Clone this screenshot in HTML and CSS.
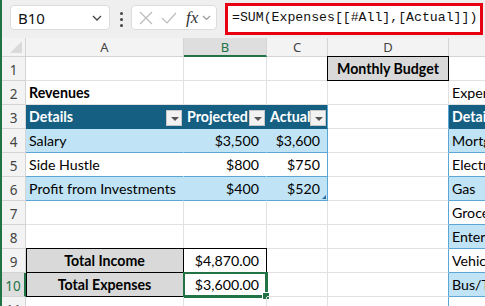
FILE: index.html
```html
<!DOCTYPE html>
<html lang="en">
<head>
    <meta charset="UTF-8">
    <meta name="viewport" content="width=device-width, initial-scale=1.0">
    <title>Monthly Budget</title>
    <link rel="stylesheet" href="styles.css">
</head>
<body>
    <div class="topbar">
        <div class="namebox">
            <span>B10</span>
            <svg width="10" height="6" viewBox="0 0 10 6"><path d="M1 1l4 4 4-4" fill="none" stroke="#444" stroke-width="1.3"/></svg>
        </div>
        <div class="dots"><i></i><i></i><i></i></div>
        <div class="fxbox">
            <svg width="14" height="14" viewBox="0 0 14 14"><path d="M1 1l12 12M13 1L1 13" stroke="#bbb" stroke-width="1.2"/></svg>
            <svg width="16" height="12" viewBox="0 0 16 12"><path d="M1 6l5 5L15 1" fill="none" stroke="#bbb" stroke-width="1.2"/></svg>
            <span class="fx">fx</span>
            <svg width="9" height="6" viewBox="0 0 9 6"><path d="M1 1l3.5 3.5L8 1" fill="none" stroke="#999" stroke-width="1.2"/></svg>
        </div>
        <div class="formula">=SUM(Expenses[[#All],[Actual]])</div>
    </div>

    <div class="sheet">
        <!-- column headers -->
        <div class="corner"></div>
        <div class="colh">A</div>
        <div class="colh sel">B</div>
        <div class="colh">C</div>
        <div class="colh">D</div>
        <div class="colh">E</div>

        <!-- row 1 -->
        <div class="rowh">1</div>
        <div class="c"></div>
        <div class="c"></div>
        <div class="c"></div>
        <div class="c title">Monthly Budget</div>
        <div class="c"></div>

        <!-- row 2 -->
        <div class="rowh">2</div>
        <div class="c bold">Revenues</div>
        <div class="c"></div>
        <div class="c"></div>
        <div class="c"></div>
        <div class="c">Expenses</div>

        <!-- row 3 -->
        <div class="rowh">3</div>
        <div class="c th">Details<span class="filter"></span></div>
        <div class="c th">Projected<span class="filter"></span></div>
        <div class="c th last">Actual<span class="filter"></span></div>
        <div class="c edge"></div>
        <div class="c th">Details</div>

        <!-- row 4 -->
        <div class="rowh">4</div>
        <div class="c td band">Salary</div>
        <div class="c td band num">$3,500</div>
        <div class="c td band num last">$3,600</div>
        <div class="c edge"></div>
        <div class="c td band">Mortgage</div>

        <!-- row 5 -->
        <div class="rowh">5</div>
        <div class="c td">Side Hustle</div>
        <div class="c td num">$800</div>
        <div class="c td num last">$750</div>
        <div class="c edge"></div>
        <div class="c td">Electricity</div>

        <!-- row 6 -->
        <div class="rowh">6</div>
        <div class="c td band">Profit from Investments</div>
        <div class="c td band num">$400</div>
        <div class="c td band num last">$520<span class="resize"></span></div>
        <div class="c edge"></div>
        <div class="c td band">Gas</div>

        <!-- row 7 -->
        <div class="rowh">7</div>
        <div class="c"></div>
        <div class="c"></div>
        <div class="c"></div>
        <div class="c edge"></div>
        <div class="c td">Groceries</div>

        <!-- row 8 -->
        <div class="rowh">8</div>
        <div class="c"></div>
        <div class="c"></div>
        <div class="c"></div>
        <div class="c edge"></div>
        <div class="c td band">Entertainment</div>

        <!-- row 9 -->
        <div class="rowh">9</div>
        <div class="c label top">Total Income</div>
        <div class="c total top num">$4,870.00</div>
        <div class="c"></div>
        <div class="c edge"></div>
        <div class="c td">Vehicle</div>

        <!-- row 10 -->
        <div class="rowh sel">10</div>
        <div class="c label">Total Expenses</div>
        <div class="c total num active">$3,600.00<span class="handle"></span></div>
        <div class="c"></div>
        <div class="c edge"></div>
        <div class="c td band">Bus/Train</div>

        <!-- row 11 -->
        <div class="rowh">11</div>
        <div class="c"></div>
        <div class="c"></div>
        <div class="c"></div>
        <div class="c edge"></div>
        <div class="c td"></div>
    </div>
</body>
</html>
```

FILE: styles.css
```css
body { margin: 0; border-left: 2px solid #217346; height: 306px; overflow: hidden; background: #fff; font-family: Lato, "Liberation Sans", sans-serif; }

.topbar { display: flex; align-items: flex-start; height: 38px; background: #efefef; padding-left: 8px; box-sizing: border-box; }
.namebox { display: flex; align-items: center; justify-content: space-between; width: 100px; height: 25px; margin-top: 5px; padding: 0 7px 0 7px; box-sizing: border-box; background: #fff; border: 1px solid #dcdcdc; border-radius: 4px; font: 15px "Noto Sans", sans-serif; color: #111; }
.dots { display: flex; flex-direction: column; gap: 3px; margin: 12px 8px 0 10px; }
.dots i { width: 3px; height: 3px; background: #444; border-radius: 50%; }
.fxbox { display: flex; align-items: center; gap: 8px; width: 86px; height: 25px; margin-top: 5px; padding-left: 7px; box-sizing: border-box; background: #fff; border: 1px solid #dcdcdc; border-radius: 4px; }
.fx { font: italic 17px "Liberation Serif", serif; color: #333; margin-left: 1px; margin-right: -4px; }
.formula { margin: 3px 0 0 8px; width: 258px; height: 32px; box-sizing: border-box; border: 3px solid #e60012; background: #fff; padding: 4px 0 0 4px; font: 13.2px "Liberation Mono", monospace; color: #111; white-space: nowrap; overflow: hidden; }

.sheet { display: grid; grid-template-columns: 24px 158px 83px 61px 121px 110px; grid-template-rows: 19px repeat(11, 24px); }

.corner { background: #f3f3f3; border-right: 1px solid #d4d4d4; border-bottom: 1px solid #d4d4d4; position: relative; }
.corner::after { content: ""; position: absolute; right: 3px; bottom: 3px; border-left: 12px solid transparent; border-bottom: 12px solid #dadada; }
.colh { background: #f3f3f3; border-right: 1px solid #d4d4d4; border-bottom: 1px solid #d4d4d4; text-align: center; font: 13px "Noto Sans", sans-serif; line-height: 18px; color: #444; }
.colh.sel { background: #dedede; border-bottom: 2px solid #217346; color: #217346; }
.rowh { background: #f3f3f3; border-right: 1px solid #d4d4d4; border-bottom: 1px solid #d4d4d4; text-align: center; font: 13.5px "Noto Sans", sans-serif; line-height: 26px; color: #444; }
.rowh.sel { background: #dedede; border-right: 2px solid #217346; color: #217346; }

.c { display: flex; align-items: flex-end; padding: 0 3px 2px 3px; border-right: 1px solid #e1e1e1; border-bottom: 1px solid #e1e1e1; font-size: 14.2px; line-height: 18px; color: #000; white-space: nowrap; overflow: hidden; position: relative; }
.bold { font-weight: bold; }
.title { justify-content: center; font-weight: bold; background: #d9d9d9; border: 1px solid #000; margin: -1px 0 0 -1px; }
.edge { border-right-color: #5aa6d6; }

.th { background: #156082; color: #fff; font-weight: bold; border-right-color: #156082; border-bottom-color: #156082; }
.th.last { border-right-color: #5aa6d6; }
.td { border-right-color: transparent; border-bottom-color: #5aa6d6; }
.td.last { border-right-color: #5aa6d6; }
.band { background: #c0e4f5; }
.num { justify-content: flex-end; padding-right: 7px; }
.th .filter { position: absolute; right: 1px; bottom: 2px; width: 16px; height: 16px; box-sizing: border-box; background: #f2f2f2; border: 1px solid #c8c8c8; }
.th .filter::after { content: ""; position: absolute; left: 4px; top: 6px; border-left: 4px solid transparent; border-right: 4px solid transparent; border-top: 4px solid #555; }
.resize { position: absolute; right: 1px; bottom: 1px; border-left: 4px solid transparent; border-bottom: 4px solid #2e6da4; }

.label { justify-content: center; font-weight: bold; background: #d9d9d9; border-right: 1px solid #000; border-bottom: 1px solid #000; box-shadow: inset 1px 0 0 #000; }
.total { border-right: 1px solid #000; border-bottom: 1px solid #000; }
.top { border-top: 1px solid #000; margin-top: -1px; }
.active { overflow: visible; box-shadow: 0 0 0 1px #217346, inset 0 0 0 1px #217346; border-color: #217346; }
.handle { position: absolute; right: -4px; bottom: -4px; width: 6px; height: 6px; background: #217346; border: 1px solid #fff; }
```
